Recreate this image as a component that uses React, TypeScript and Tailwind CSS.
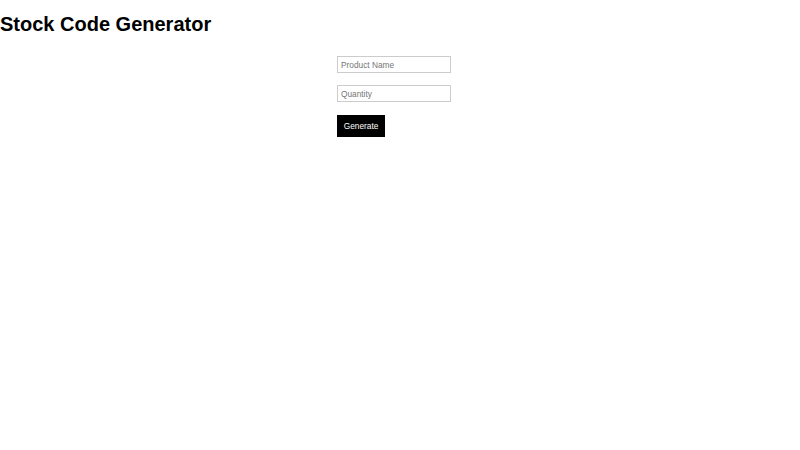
export default function App() {
  return (
    <div className="min-h-[450px] bg-white text-black" style={{ fontFamily: '"Liberation Sans", Arial, sans-serif' }}>
      <h1 className="text-[20px] font-bold leading-none pt-[14px] m-0">Stock Code Generator</h1>
      <div className="pl-[337px] pt-[22px] flex flex-col items-start">
        <input
          placeholder="Product Name"
          className="w-[114px] h-[17px] border border-[#cccccc] px-[3px] text-[8.3px] placeholder:text-[#757575] outline-none"
        />
        <input
          placeholder="Quantity"
          className="mt-[12px] w-[114px] h-[17px] border border-[#cccccc] px-[3px] text-[8.3px] placeholder:text-[#757575] outline-none"
        />
        <button className="mt-[13px] w-[48px] h-[22px] bg-black text-white text-[8.3px]">Generate</button>
      </div>
    </div>
  );
}
